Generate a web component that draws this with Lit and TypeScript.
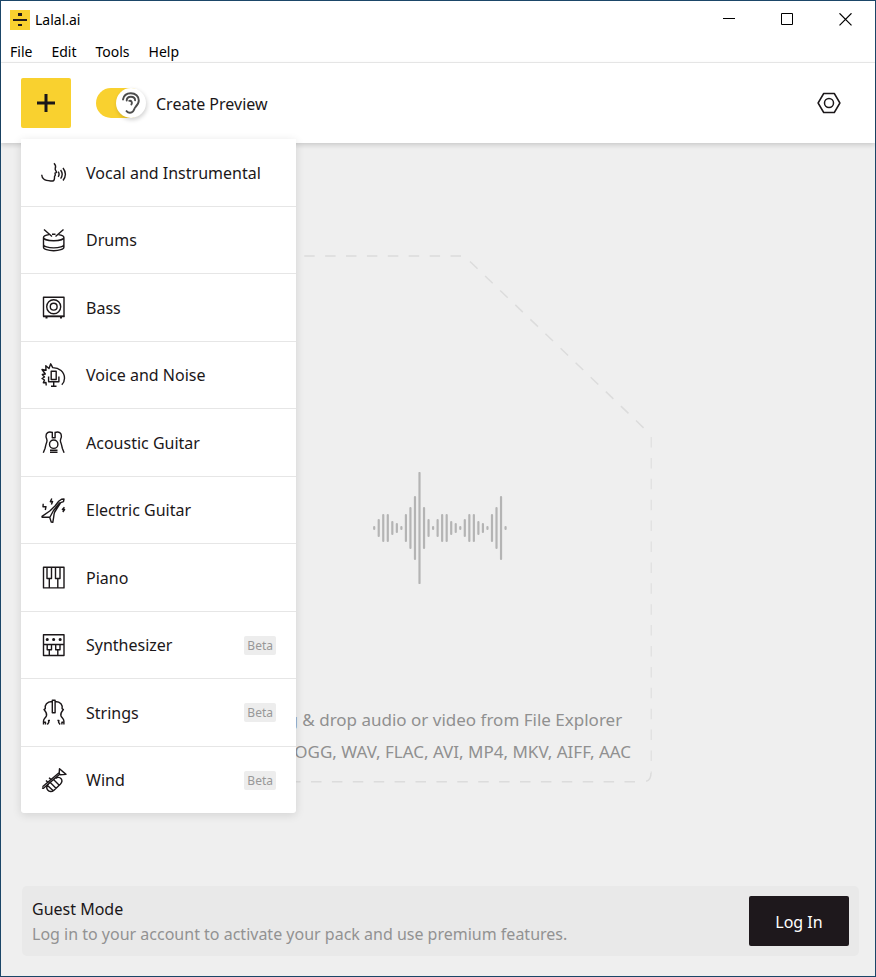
import { LitElement, html, svg, css, SVGTemplateResult } from "lit";
import { customElement, state } from "lit/decorators.js";

const icons: Record<string, SVGTemplateResult> = {
  vocal: svg`<path d="M14 4.2c1.800 1.800 2 3.600 1.200 5.400-.5 1.200 1 2.200 1.400 3.800l-1.600.8.3 1.600c.2 1-.8 1-.8 2 .2 2.600-.5 4.200-2 4.200-4.500-.2-6.500 0-8.500-1.700-1.500-1.200-2.200-2.500-2.300-4.600"/><path d="M18.200 12.700c1 1.500 1 3.700 0 5.200M20.600 11c2 2.700 2 5.900 0 8.600M23 9c3 3.900 3 8.600 0 12.500"/>`,
  drums: svg`<path d="M9 7.600c-3.300.5-5.500 1.500-5.500 2.900 0 1.800 4.600 3.200 10.200 3.200s10.200-1.400 10.200-3.200c0-1.400-2.200-2.400-5.500-2.900M12 7.200h3.500M3.500 10.500v9.700c0 1.900 4.600 3.500 10.200 3.500s10.200-1.600 10.200-3.500v-9.700M3.500 17.500c0 1.900 4.600 3.400 10.200 3.400s10.200-1.500 10.200-3.400"/><path d="M4 2.500l8 7M23.500 2.500l-8 7"/>`,
  bass: svg`<path d="M3.500 3.300h20.500v18.900h-20.500z"/><circle cx="13.700" cy="12.700" r="7"/><circle cx="13.700" cy="12.700" r="3.400"/><path d="M3 22.500h21.500M5.500 23.900h2M20 23.900h2"/>`,
  voice: svg`<path d="M6.200 23.500l-.2-3-2.700.2 1.200-2.700-2.500-1.500 2.500-1.500-2.200-2.500 3-.5-3.300-4.500 4 .8-.2-4.500 3.200 2.700 1.700-4.700 2 3.800c6.500.2 11.800 4.200 11.800 10.700 0 2.600-1 4.800-2.700 6.400"/><path d="M11.200 9.300h5v8.200h-5zM8.600 14.500v5.200h10.300v-5.200M13.700 19.700v4.300M11 24.200h5.500"/>`,
  acoustic: svg`<path d="M12.300 2.700v6h2.800v-6M12.300 3.500C8.500 2.200 5.800 4 6 7.500c.2 2.500 1.700 3.200.8 5.500-1.200 3-1 3.800-1.800 6.500l-1.700 4.200M15.100 3.500c3.800-1.300 6.500.5 6.300 4-.2 2.500-1.700 3.200-.8 5.500 1.200 3 1 3.800 1.800 6.500l1.700 4.200"/><circle cx="13.700" cy="15.200" r="4.200"/><path d="M10 21.300h7.500M10 23.300h7.500"/>`,
  electric: svg`<path d="M21.500 2.200l2.500-.2-.5 2.700-2.800 1-6 9.300c-.7 1.500-.8 3.300-1 5l-.9 5.300-1.600-.3-1.500-4.700-7.500 0-.2-1 7.800-5.300 5.200-5 3.700-4.700zM10 20l3.500-6.500 6.500-8"/><path d="M3.200 6.700L3 9.800l3-.2-.7 3.400M11.800 1.500l-1.500 3.200 2.300-.2-1.200 3M24.400 10.200l-2 2.300h2.200l-1.800 2.500"/>`,
  piano: svg`<path d="M3.500 3.300h20.500v20.600h-20.500zM7 3.500v11h4.500v-11M15.500 3.500v11h4.500v-11M9.300 14.500v9.400M17.800 14.500v9.400"/>`,
  synth: svg`<path d="M3.500 2.800h20.500v20.700h-20.500zM3.500 12.500h20.500M7.200 12.500v5.300h4.300v-5.300M15.700 12.500v5.300h4.300v-5.300M9.300 17.800v5.500M17.800 17.800v5.500"/><path class="dots" d="M7.200 7.600h.1M13.600 7.600h.1M20.100 7.600h.1"/>`,
  strings: svg`<path d="M12.300 1.300v12.500h2.800V1.300zM12 2.500C6.800 2.700 4.600 6 5.300 9.700l-1.300.9c1.500 1.800 3.200 3.500 2.500 6-.4 2-3 2.700-3 5.400v3.500M15.400 2.500c5.200.2 7.400 3.500 6.700 7.200l1.300.9c-1.500 1.800-3.200 3.500-2.500 6 .4 2 3 2.700 3 5.400v3.500"/><path d="M3.700 23.300h1.800v2.200M23.700 23.300h-1.800v2.200M10 21.500H8.500l.3 1.800-1.500 2.200M17.400 21.500h1.500l-.3 1.800 1.500 2.200"/>`,
  wind: svg`<path d="M2 21l1.500.3L20.200 6.800M2.500 19.700L19.300 5.500M19.500 1.700l6.500 5.700-6 .3-.8-1.600z"/><path d="M8.500 17c-1.800 1.700-2.200 4.200-.8 6 1.500 1.900 4.200 2 6 .4l6.600-6.200c1.700-1.700 2-3.900.8-5.500-1.400-1.700-3.700-1.700-5.400-.3M9.500 14.700l6.500 6.500M13 12l6 6M7 18l6 5.500M6 13.500l2.300 2.200M9 10.700l2.500 2.200"/>`,
};

interface Stem {
  icon: string;
  label: string;
  beta?: boolean;
}

const stems: Stem[] = [
  { icon: "vocal", label: "Vocal and Instrumental" },
  { icon: "drums", label: "Drums" },
  { icon: "bass", label: "Bass" },
  { icon: "voice", label: "Voice and Noise" },
  { icon: "acoustic", label: "Acoustic Guitar" },
  { icon: "electric", label: "Electric Guitar" },
  { icon: "piano", label: "Piano" },
  { icon: "synth", label: "Synthesizer", beta: true },
  { icon: "strings", label: "Strings", beta: true },
  { icon: "wind", label: "Wind", beta: true },
];

const base = css`
  * {
    box-sizing: border-box;
  }
  button {
    margin: 0;
    padding: 0;
    border: 0;
    background: none;
    color: inherit;
    font: inherit;
    cursor: pointer;
  }
  svg {
    display: block;
    flex: none;
    fill: none;
    stroke: currentColor;
  }
`;

@customElement("title-bar")
class TitleBar extends LitElement {
  static styles = [
    base,
    css`
      :host {
        display: block;
        background: #fff;
        font-size: 14px;
        color: #000;
      }
      .caption {
        display: flex;
        align-items: center;
        height: 37px;
        padding: 0 2px 0 9px;
      }
      .title {
        flex: 1;
        margin-left: 5px;
      }
      .control {
        display: grid;
        place-items: center;
        width: 58px;
        height: 36px;
      }
      .menus {
        display: flex;
        gap: 19px;
        height: 25px;
        padding-left: 9px;
        border-bottom: 1px solid #ececec;
        line-height: 28px;
      }
    `,
  ];

  render() {
    return html`
      <header class="caption">
        <svg width="20" height="20" aria-hidden="true">
          <path fill="#f9d12f" stroke="none" d="M0 0h20v20H0z" />
          <path fill="#221a1c" stroke="none" d="M3 9h14v2H3zM8 3h4v3H8zM8 14h4v2H8z" />
        </svg>
        <span class="title">Lalal.ai</span>
        <button class="control" aria-label="Minimize">
          <svg width="13" height="13"><path d="M1 5.500h12" /></svg>
        </button>
        <button class="control" aria-label="Maximize">
          <svg width="13" height="13"><path d="M1.500 .5h11v11h-11z" /></svg>
        </button>
        <button class="control" aria-label="Close">
          <svg width="15" height="13" stroke-width="1.200"><path d="M2.500 .3l12 12M14.500 .3l-12 12" /></svg>
        </button>
      </header>
      <nav class="menus" aria-label="Application">
        ${["File", "Edit", "Tools", "Help"].map((m) => html`<button>${m}</button>`)}
      </nav>
    `;
  }
}

@customElement("stem-menu")
class StemMenu extends LitElement {
  static styles = [
    base,
    css`
      :host {
        display: block;
        width: 275px;
        background: #fff;
        border-radius: 0 0 3px 3px;
        box-shadow: 0 2px 10px rgba(0, 0, 0, 0.12);
      }
      .list {
        margin: 0;
        padding: 0;
        list-style: none;
      }
      .row {
        height: 68px;
        border-bottom: 1px solid #e6e6e6;
      }
      .row:nth-child(even) {
        height: 67px;
      }
      .row:last-child {
        height: 66px;
        border-bottom: 0;
      }
      .item {
        display: flex;
        align-items: center;
        width: 100%;
        height: 100%;
        padding: 0 20px 0 19px;
        text-align: left;
      }
      .icon {
        stroke-width: 1.4;
        stroke-linejoin: round;
      }
      .icon .dots {
        stroke-width: 3;
        stroke-linecap: round;
      }
      .label {
        flex: 1;
        margin-left: 19px;
      }
      .beta {
        padding: 0 3px;
        border-radius: 2px;
        background: #ededed;
        color: #989898;
        font-size: 12px;
        line-height: 19px;
      }
    `,
  ];

  render() {
    return html`
      <ul class="list">
        ${stems.map(
          (s) => html`<li class="row">
            <button class="item">
              <svg class="icon" width="27" height="27" aria-hidden="true">${icons[s.icon]}</svg>
              <span class="label">${s.label}</span>
              ${s.beta ? html`<span class="beta">Beta</span>` : null}
            </button>
          </li>`
        )}
      </ul>
    `;
  }
}

@customElement("drop-zone")
class DropZone extends LitElement {
  static levels = [
    2, 9, 14, 14, 7, 5, 2, 14, 21, 32, 56, 21, 9, 2, 9, 14, 14, 7, 5, 2, 9, 14, 14, 7, 5, 2, 14, 21, 32, 2,
  ];

  static styles = [
    base,
    css`
      :host {
        position: relative;
        display: flex;
        flex-direction: column;
        align-items: center;
        width: 423px;
        padding: 217px 0 15px;
        color: #909090;
        font-size: 17px;
        line-height: 32px;
        text-align: center;
      }
      .outline {
        position: absolute;
        inset: 0;
        width: 100%;
        height: 100%;
        stroke: #dcdcdc;
        stroke-width: 1.5;
        stroke-dasharray: 10.500 10.400;
      }
      .wave {
        margin-bottom: 120px;
        stroke: #b4b4b4;
        stroke-width: 2.2;
        stroke-linecap: round;
      }
      .hint {
        margin: 0;
      }
    `,
  ];

  render() {
    return html`
      <svg class="outline" viewBox="0 0 423 528" aria-hidden="true">
        <path d="M232 .9H6Q1 .9 1 6v515q0 6 6 6" />
        <path d="M241 6.500L421 179" />
        <path d="M422.300 182v336" stroke="#e2e2e2" />
        <path d="M422 518q0 8.500-7 8.500M406 526.800H6" />
      </svg>
      <svg class="wave" width="135" height="112" aria-hidden="true">
        ${DropZone.levels.map((h, i) => {
          const x = 1.2 + i * 4.53;
          return svg`<line x1=${x} x2=${x} y1=${57 - h} y2=${55 + h} />`;
        })}
      </svg>
      <p class="hint">Drag &amp; drop audio or video from File Explorer</p>
      <p class="hint">MP3, OGG, WAV, FLAC, AVI, MP4, MKV, AIFF, AAC</p>
    `;
  }
}

@customElement("app-root")
class AppRoot extends LitElement {
  @state() private preview = true;

  static styles = [
    base,
    css`
      :host {
        display: flex;
        flex-direction: column;
        box-sizing: border-box;
        min-height: 100vh;
        border: 1px solid #1b4668;
        background: #efefef;
        color: #1b1719;
        font: 16px/24px "Noto Sans", "Open Sans", sans-serif;
      }
      .toolbar {
        position: relative;
        z-index: 1;
        display: flex;
        align-items: center;
        height: 80px;
        padding: 0 34px 0 20px;
        background: #fff;
        box-shadow: 0 2px 5px rgba(0, 0, 0, 0.16);
      }
      .add-wrap {
        position: relative;
      }
      .add {
        display: grid;
        place-items: center;
        width: 50px;
        height: 50px;
        border-radius: 2px;
        background: #f9d12f;
      }
      .menu {
        position: absolute;
        top: 61px;
        left: 0;
      }
      .preview {
        display: flex;
        align-items: center;
        margin-left: 25px;
        cursor: pointer;
      }
      .switch {
        position: relative;
        width: 50px;
        height: 30px;
        margin-right: 10px;
      }
      .track {
        appearance: none;
        display: block;
        width: 49px;
        height: 30px;
        margin: 0;
        border-radius: 15px;
        background: #ccc;
      }
      .track:checked {
        background: #f9d12f;
      }
      .thumb {
        position: absolute;
        top: 0;
        right: 0;
        display: grid;
        place-items: center;
        width: 30px;
        height: 30px;
        border-radius: 50%;
        background: #fff;
        box-shadow: 1px 2px 4px rgba(0, 0, 0, 0.18);
        color: #4c4c4c;
        pointer-events: none;
      }
      .caption,
      .login {
        padding-top: 2px;
      }
      .settings {
        margin-left: auto;
      }
      .content {
        flex: 1;
        display: flex;
        flex-direction: column;
        align-items: center;
        padding: 112px 16px 20px 21px;
      }
      .account {
        display: flex;
        align-items: center;
        width: 100%;
        margin-top: auto;
        padding: 10px;
        border-radius: 5px;
        background: #e9e9e9;
      }
      .info {
        flex: 1;
      }
      .mode,
      .about {
        margin: 0;
        font-size: 16px;
        font-weight: 400;
      }
      .mode {
        line-height: 26px;
      }
      .about {
        color: #929292;
      }
      .login {
        width: 100px;
        height: 50px;
        border-radius: 2px;
        background: #1e181c;
        color: #fff;
      }
    `,
  ];

  render() {
    return html`
      <title-bar></title-bar>
      <div class="toolbar">
        <div class="add-wrap">
          <button class="add" aria-label="Add files" aria-expanded="true">
            <svg width="18" height="18" stroke-width="3"><path d="M9 0v18M0 9h18" /></svg>
          </button>
          <stem-menu class="menu"></stem-menu>
        </div>
        <label class="preview">
          <span class="switch">
            <input
              class="track"
              type="checkbox"
              .checked=${this.preview}
              @change=${(e: Event) => (this.preview = (e.target as HTMLInputElement).checked)}
            />
            <span class="thumb">
              <svg width="20" height="22" stroke-width="1.900" stroke-linecap="round" aria-hidden="true">
                <path d="M2 7.500C2.700 3.500 5.600 1.200 9.800 1.200c4.700 0 8 3 8 7.300 0 3-1.600 4.700-3.300 6.500-1.300 1.500-1.300 2.900-2.500 4.400-1.600 1.900-4.600 1.900-6.500-.3" />
                <path d="M5.700 8.600c0-2.300 1.800-3.900 4.200-3.900 2.500 0 4.200 1.500 4.200 3.600M8.200 8.900c2.200-.5 3.500 1.500 2.200 3.500" />
              </svg>
            </span>
          </span>
          <span class="caption">Create Preview</span>
        </label>
        <button class="settings" aria-label="Settings">
          <svg width="24" height="22" stroke-width="1.500" stroke-linejoin="round">
            <path d="M6.700 1.500h10.600l5.600 9.500-5.600 9.500H6.700L1.100 11z" />
            <circle cx="12" cy="11" r="4.500" />
          </svg>
        </button>
      </div>
      <main class="content">
        <drop-zone></drop-zone>
        <section class="account">
          <div class="info">
            <h2 class="mode">Guest Mode</h2>
            <p class="about">Log in to your account to activate your pack and use premium features.</p>
          </div>
          <button class="login">Log In</button>
        </section>
      </main>
    `;
  }
}
